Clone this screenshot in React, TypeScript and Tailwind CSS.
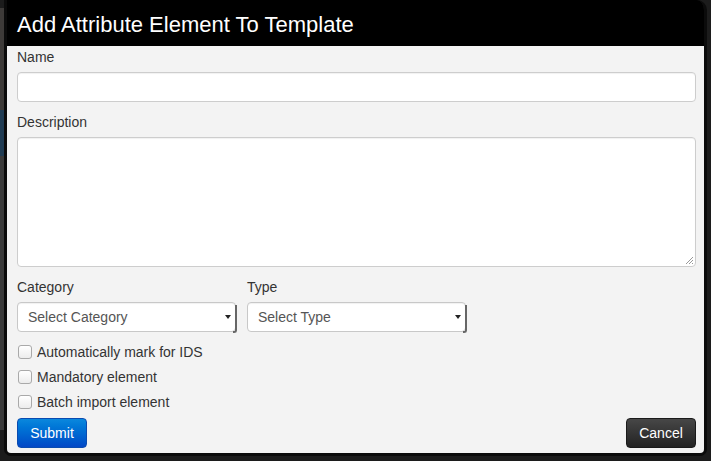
import React from "react";

const font = { fontFamily: '"Liberation Sans", Arial, sans-serif' };

function FakeSelect({ label }: { label: string }) {
  return (
    <div className="relative w-[219px] h-[30px] bg-white border border-[#c8c8c8] rounded-[4px] shadow-[inset_0_1px_1px_rgba(0,0,0,0.06)] flex items-center pl-[10px] text-[14px] text-[#555]">
      {label}
      {/* little caret and the dark right edge of the native select */}
      <span className="absolute right-[4px] top-[12px] w-0 h-0 border-l-[3px] border-r-[3px] border-t-[4px] border-l-transparent border-r-transparent border-t-[#222]" />
      <span className="absolute right-[-2px] top-[2px] bottom-[-2px] w-[4px] border-r-[2px] border-b-[2px] border-[#666] rounded-br-[3px]" />
    </div>
  );
}

function Check({ label }: { label: string }) {
  return (
    <label className="flex items-center h-[20px] text-[14px] text-[#333]">
      <span className="ml-[1px] w-[14px] h-[14px] rounded-[3px] border border-[#a9a9a9] bg-gradient-to-b from-[#ffffff] to-[#ececec]" />
      <span className="ml-[5px]">{label}</span>
    </label>
  );
}

export default function App() {
  return (
    <div className="w-[711px] h-[461px] bg-[#1c1c1c] flex overflow-hidden" style={font}>
      {/* page behind the overlay */}
      <div className="w-[4px] flex flex-col">
        <div className="h-[8px] bg-[#1c1c1c]" />
        <div className="h-[102px] bg-[#3d3a38]" />
        <div className="h-[46px] bg-[#1f3b52]" />
        <div className="h-[274px] bg-[#3a3a3a]" />
      </div>

      <div className="w-[703px] h-[456px] border-l-[3px] border-r-[3px] border-b-[3px] border-[#0b0b0b] rounded-tr-[10px] rounded-b-[7px] overflow-hidden flex flex-col">
        <div className="h-[46px] bg-black flex items-center pl-[10px] pt-[3px] text-white text-[22px]">
          Add Attribute Element To Template
        </div>

        <div className="flex-1 bg-[#f3f3f3] pt-[1px] pl-[10px] pr-[8px] flex flex-col">
          <div className="h-[21px] flex items-center text-[14px] text-[#333]">Name</div>
          <div className="mt-[4px] h-[30px] bg-white border border-[#cdcdcd] rounded-[4px] shadow-[inset_0_1px_1px_rgba(0,0,0,0.06)]" />

          <div className="mt-[10px] h-[20px] flex items-center text-[14px] text-[#333]">Description</div>
          <div className="relative mt-[5px] h-[130px] bg-white border border-[#cdcdcd] rounded-[4px] shadow-[inset_0_1px_1px_rgba(0,0,0,0.06)]">
            <svg className="absolute right-[1px] bottom-[1px]" width="9" height="9" viewBox="0 0 9 9">
              <path d="M8 1L1 8M8 4L4 8M8 7L7 8" stroke="#999" strokeWidth="1" />
            </svg>
          </div>

          <div className="mt-[10px] flex gap-[11px]">
            <div className="flex flex-col">
              <div className="h-[20px] flex items-center text-[14px] text-[#333]">Category</div>
              <div className="mt-[5px]">
                <FakeSelect label="Select Category" />
              </div>
            </div>
            <div className="flex flex-col">
              <div className="h-[20px] flex items-center text-[14px] text-[#333]">Type</div>
              <div className="mt-[5px]">
                <FakeSelect label="Select Type" />
              </div>
            </div>
          </div>

          <div className="mt-[10px] flex flex-col gap-[5px]">
            <Check label="Automatically mark for IDS" />
            <Check label="Mandatory element" />
            <Check label="Batch import element" />
          </div>

          <div className="mt-[6px] flex justify-between">
            <button className="w-[70px] h-[30px] rounded-[4px] border border-[#0a4bb0] bg-gradient-to-b from-[#0b88dd] to-[#0447c6] text-white text-[14px]">
              Submit
            </button>
            <button className="w-[70px] h-[30px] rounded-[4px] border border-[#1a1a1a] bg-gradient-to-b from-[#474747] to-[#232323] text-white text-[14px]">
              Cancel
            </button>
          </div>
        </div>
      </div>
    </div>
  );
}
